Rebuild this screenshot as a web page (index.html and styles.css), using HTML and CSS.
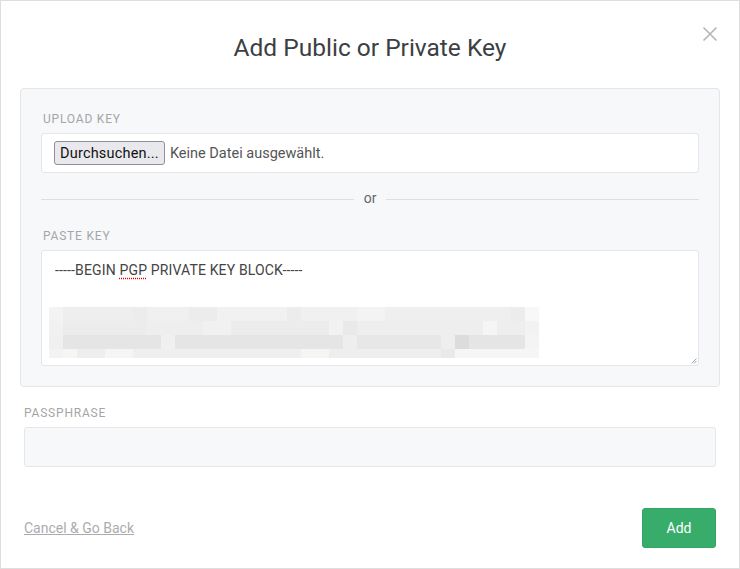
FILE: index.html
```html
<!DOCTYPE html>
<html lang="de">
<head>
<meta charset="utf-8">
<title>Add Public or Private Key</title>
<link rel="stylesheet" href="styles.css">
</head>
<body>
<div class="modal">
  <button class="close" aria-label="Close">
    <svg width="16" height="16" viewBox="0 0 16 16"><path d="M1.5 1.5 L14.5 14.5 M14.5 1.5 L1.5 14.5" stroke="#b4b4b4" stroke-width="1.6" fill="none"/></svg>
  </button>
  <h1 class="title">Add Public or Private Key</h1>
  <div class="panel">
    <div class="label inset">Upload Key</div>
    <div class="file-box">
      <span class="file-btn">Durchsuchen...</span>
      <span class="file-name">Keine Datei ausgewählt.</span>
    </div>
    <div class="divider"><span class="line"></span><span class="or">or</span><span class="line"></span></div>
    <div class="label inset">Paste Key</div>
    <div class="textarea">
      <div class="key-line">-----BEGIN <span class="spell">PGP</span> PRIVATE KEY BLOCK-----</div>
      <div class="blur">
        <div class="r r1"></div>
        <div class="r r2"></div>
        <div class="r r3"></div>
        <div class="r r4"></div>
      </div>
      <svg class="grip" width="6" height="6" viewBox="0 0 6 6"><path d="M5.5 0.5 L0.5 5.5 M5.5 3 L3 5.5" stroke="#9a9a9a" stroke-width="0.9"/></svg>
    </div>
  </div>
  <div class="section">
    <div class="label">Passphrase</div>
    <div class="input"></div>
  </div>
  <div class="footer">
    <a class="cancel" href="#">Cancel &amp; Go Back</a>
    <button class="add">Add</button>
  </div>
</div>
</body>
</html>
```
FILE: styles.css
```css
html, body {
  margin: 0;
  padding: 0;
  background: #fff;
}
body {
  font-family: "Roboto", "Liberation Sans", sans-serif;
  color: #444;
}
.modal {
  position: relative;
  box-sizing: border-box;
  width: 740px;
  height: 569px;
  border: 1px solid #dedede;
  background: #fff;
  padding: 0 19px;
}
.close {
  position: absolute;
  top: 24px;
  left: 700px;
  width: 18px;
  height: 18px;
  padding: 1px;
  border: 0;
  background: none;
}
.title {
  margin: 0 0 23px;
  padding-top: 30px;
  line-height: 34px;
  font-size: 24.5px;
  font-weight: 400;
  text-align: center;
  color: #3b3f44;
}
.panel {
  border: 1px solid #e3e5e8;
  border-radius: 4px;
  background: #f7f8fa;
  padding: 21px 20px 20px;
}
.label {
  font-size: 12px;
  line-height: 16px;
  padding-top: 1px;
  text-transform: uppercase;
  letter-spacing: 0.8px;
  color: #a3a6a9;
  margin-bottom: 6px;
}
.inset {
  padding-left: 2px;
}
.file-box {
  box-sizing: border-box;
  height: 40px;
  border: 1px solid #e4e6e9;
  border-radius: 3px;
  background: #fff;
  padding: 0 12px;
  display: flex;
  align-items: center;
  gap: 5px;
  font-size: 14px;
}
.file-btn {
  box-sizing: border-box;
  height: 24px;
  line-height: 23px;
  padding: 0 5px;
  border: 1px solid #8f8f9d;
  border-radius: 3px;
  background: #e9e9ed;
  color: #111;
  font-size: 14.5px;
  letter-spacing: 0.2px;
}
.file-name {
  color: #555;
  font-size: 14.5px;
  padding-top: 1px;
}
.divider {
  display: flex;
  align-items: center;
  height: 20px;
  margin: 16px 0 18px;
  gap: 10px;
}
.line {
  flex: 1;
  height: 1px;
  background: #dcdfe2;
}
.or {
  font-size: 14px;
  color: #666;
  line-height: 20px;
  padding: 0 0 2px;
}
.textarea {
  position: relative;
  box-sizing: border-box;
  height: 116px;
  border: 1px solid #e4e6e9;
  border-radius: 3px;
  background: #fff;
  padding: 10px 13px 0;
  overflow: hidden;
}
.key-line {
  font-size: 14px;
  line-height: 18px;
  letter-spacing: 0.15px;
  color: #444;
}
.spell {
  text-decoration: underline dotted #d00;
  text-underline-offset: 3px;
}
.blur {
  margin: 28px 0 0 -6px;
  width: 490px;
}
.r {
  height: 14px;
}
.r4 {
  height: 9px;
}
.r1 {
  background: linear-gradient(90deg, #f3f3f3 0 14px, #eeeeee 14px 84px, #ececec 84px 98px, #f0f0f0 98px 140px, #ececec 140px 168px, #f1f1f1 168px 238px, #ececec 238px 252px, #f0f0f0 252px 308px, #f3f3f3 308px 336px, #efefef 336px 462px, #ececec 462px 476px, #f8f8f8 476px 490px);
}
.r2 {
  background: linear-gradient(90deg, #f1f1f1 0 14px, #ececec 14px 98px, #eeeeee 98px 154px, #f1f1f1 154px 182px, #ececec 182px 280px, #f2f2f2 280px 294px, #e9e9e9 294px 308px, #eeeeee 308px 434px, #f5f5f5 434px 448px, #eeeeee 448px 476px, #f2f2f2 476px 490px);
}
.r3 {
  background: linear-gradient(90deg, #f0f0f0 0 14px, #e5e5e5 14px 112px, #f0f0f0 112px 126px, #e5e5e5 126px 294px, #eeeeee 294px 308px, #e7e7e7 308px 392px, #eeeeee 392px 406px, #dcdcdc 406px 420px, #e5e5e5 420px 476px, #f4f4f4 476px 490px);
}
.r4 {
  background: linear-gradient(90deg, #f3f3f3 0 14px, #f6f6f2 14px 28px, #eeeeee 28px 56px, #f5f5f5 56px 84px, #efefef 84px 252px, #f5f5f3 252px 280px, #eeeeee 280px 392px, #e9e9e9 392px 406px, #f6f6f6 406px 490px);
}
.grip {
  position: absolute;
  right: 1px;
  bottom: 1px;
}
.section {
  padding: 17px 4px 0;
}
.input {
  box-sizing: border-box;
  height: 40px;
  border: 1px solid #e4e6e9;
  border-radius: 3px;
  background: #f7f8fa;
}
.footer {
  margin-top: 41px;
  padding: 0 4px;
  display: flex;
  align-items: center;
  justify-content: space-between;
}
.cancel {
  font-size: 14px;
  color: #aaadb0;
  text-decoration: underline;
}
.add {
  box-sizing: border-box;
  width: 74px;
  height: 40px;
  border: 1px solid #34a463;
  border-radius: 3px;
  background: #38ad6b;
  color: #fff;
  font-family: inherit;
  font-size: 14px;
}
```
